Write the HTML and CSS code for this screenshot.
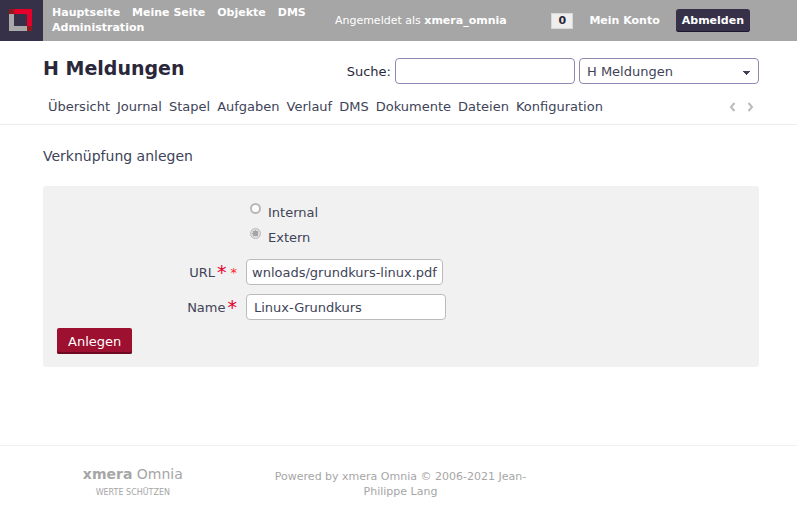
FILE: index.html
```html
<!DOCTYPE html>
<html lang="de">
<head>
<meta charset="utf-8">
<meta name="viewport" content="width=device-width, initial-scale=1">
<title>Verknüpfung anlegen - H Meldungen</title>
<link rel="stylesheet" href="styles.css">
</head>
<body>
<div class="topbar">
  <a class="logo" href="#" aria-label="xmera Omnia">
    <svg width="23" height="22" viewBox="0 0 23 22" aria-hidden="true">
      <path fill="#a9a9a9" d="M0 5h5v12h13v5H0z"/>
      <path fill="#e4002b" d="M5 0h18v17h-5V5H5z"/>
      <path fill="#8f1a1c" d="M0 0h5v5H0zM18 17h5v5h-5z"/>
    </svg>
  </a>
  <nav class="topmenu">
    <a href="#">Hauptseite</a>
    <a href="#">Meine Seite</a>
    <a href="#">Objekte</a>
    <a href="#">DMS</a>
    <a href="#">Administration</a>
  </nav>
  <div class="loggedas">Angemeldet als <a href="#">xmera_omnia</a></div>
  <div class="account">
    <a class="count" href="#">0</a>
    <a class="my-account" href="#">Mein Konto</a>
    <button class="logout" type="button">Abmelden</button>
  </div>
</div>
<header class="header">
  <div class="header-row">
    <h1>H Meldungen</h1>
    <form class="search">
      <label for="q">Suche:</label>
      <input class="field" id="q" type="text">
      <select class="field" aria-label="Projekt">
        <option>H Meldungen</option>
      </select>
    </form>
  </div>
  <div class="tabs-row">
    <nav class="tabs">
      <a href="#">Übersicht</a>
      <a href="#">Journal</a>
      <a href="#">Stapel</a>
      <a href="#">Aufgaben</a>
      <a href="#">Verlauf</a>
      <a href="#">DMS</a>
      <a href="#">Dokumente</a>
      <a href="#">Dateien</a>
      <a href="#">Konfiguration</a>
    </nav>
    <div class="scroll">
      <button type="button" aria-label="Zurück"><svg width="7" height="10" viewBox="0 0 7 10"><path d="M5.5 1L2 5l3.500 4"/></svg></button>
      <button type="button" aria-label="Weiter"><svg width="7" height="10" viewBox="0 0 7 10"><path d="M1.500 1L5 5l-3.500 4"/></svg></button>
    </div>
  </div>
</header>
<main>
  <h2>Verknüpfung anlegen</h2>
  <form class="box">
    <div class="choice"><input type="radio" name="kind" id="internal"><label for="internal">Internal</label></div>
    <div class="choice"><input type="radio" name="kind" id="extern" checked><label for="extern">Extern</label></div>
    <div class="row">
      <label for="url">URL<span class="required">*</span><span class="required small">*</span></label>
      <input class="field url" id="url" type="text" value="wnloads/grundkurs-linux.pdf">
    </div>
    <div class="row">
      <label for="name">Name<span class="required">*</span></label>
      <input class="field name" id="name" type="text" value="Linux-Grundkurs">
    </div>
    <button class="submit" type="submit">Anlegen</button>
  </form>
</main>
<footer>
  <div class="brand">
    <div class="brand-name"><b>xmera</b> Omnia</div>
    <div class="claim">WERTE SCHÜTZEN</div>
  </div>
  <div class="powered">Powered by xmera Omnia © 2006-2021 Jean-Philippe Lang</div>
</footer>
</body>
</html>
```
FILE: styles.css
```css
* {
  box-sizing: border-box;
}

body {
  display: flex;
  flex-direction: column;
  min-height: 100vh;
  margin: 0;
  background: #fff;
  color: #404358;
  font: 13px/15px "DejaVu Sans", Verdana, sans-serif;
}

a {
  color: inherit;
  text-decoration: none;
}

button,
input,
select {
  margin: 0;
  color: inherit;
  font: inherit;
}

h1,
h2 {
  margin: 0;
}

/* Top bar */
.topbar {
  display: flex;
  align-items: stretch;
  background: #a6a6a6;
  color: #fff;
  font-size: 11px;
}

.logo {
  display: flex;
  align-items: flex-start;
  width: 43px;
  height: 41px;
  padding: 9px;
  background: #363149;
}

.topmenu {
  display: flex;
  flex-wrap: wrap;
  align-content: flex-start;
  column-gap: 12px;
  width: 36%;
  padding: 5px 0 0 9px;
  font-weight: bold;
}

.loggedas {
  align-self: center;
  padding-left: 5px;
}

.loggedas a {
  font-weight: bold;
}

.account {
  display: flex;
  align-items: center;
  gap: 16px;
  margin-left: auto;
  padding-right: 47px;
  font-weight: bold;
}

.count {
  width: 22px;
  height: 16px;
  border: 1px solid #d8d8d8;
  background: #eee;
  color: #2b273b;
  line-height: 13px;
  text-align: center;
}

.logout {
  height: 23px;
  padding: 0 6px;
  border: 0;
  border-radius: 3px;
  background: #363149;
  box-shadow: inset 0 -1px #1c1830;
}

/* Project header */
.header {
  padding: 16px 38px 9px 43px;
  border-bottom: 1px solid #ededed;
}

.header-row,
.tabs-row {
  display: flex;
  align-items: center;
  justify-content: space-between;
}

h1 {
  margin-bottom: 6px;
  color: #2b273b;
  font-size: 19px;
  line-height: 22px;
}

.search {
  display: flex;
  align-items: center;
  gap: 4px;
  color: #2b273b;
}

.field {
  height: 26px;
  padding: 0 7px;
  border: 1px solid #bbb;
  border-radius: 4px;
  background: #fff;
  color: #404358;
}

.search .field {
  width: 180px;
  border-color: #9388b2;
}

.search select.field {
  appearance: none;
  background: linear-gradient(to bottom right, #404358 50%, transparent 50%) right 7px top 12px / 4px 4px no-repeat,
    linear-gradient(to bottom left, #404358 50%, transparent 50%) right 11px top 12px / 4px 4px no-repeat, #fff;
}

.tabs-row {
  padding: 13px 5px 0;
}

.tabs {
  display: flex;
  gap: 7px;
}

.tabs a {
  line-height: 17px;
}

.scroll {
  display: flex;
  gap: 11px;
}

.scroll button {
  display: flex;
  padding: 0;
  border: 0;
  background: none;
}

.scroll path {
  fill: none;
  stroke: #bbb;
  stroke-width: 2;
}

/* Content */
main {
  flex: 1;
  padding: 23px 38px 24px 43px;
}

h2 {
  font-size: 14px;
  font-weight: normal;
  line-height: 17px;
}

.box {
  margin-top: 21px;
  padding: 14px 14px 13px;
  border-radius: 3px;
  background: #f1f1f1;
}

.choice {
  display: flex;
  height: 25px;
  padding-left: 193px;
  line-height: 25px;
}

.choice input {
  appearance: none;
  width: 11px;
  height: 11px;
  margin: 3px 7px 0 0;
  border: 2px solid #b8b8b8;
  border-radius: 50%;
  background: #fff;
}

.choice input:checked {
  border: 1px solid #b8b8b8;
  background: radial-gradient(circle, #a5a5a5 3px, #ddd 3px);
}

.row {
  display: flex;
  align-items: center;
  gap: 9px;
  margin-top: 9px;
}

.row label {
  display: flex;
  align-items: center;
  justify-content: flex-end;
  width: 180px;
}

.required {
  margin-left: 2px;
  color: #e4002b;
  font-size: 19px;
}

.required.small {
  margin-left: 4px;
  color: #f22;
  font-size: 13px;
}

.url {
  width: 197px;
  padding: 0 2px;
  text-align: center;
}

.name {
  width: 200px;
}

.submit {
  height: 26px;
  margin-top: 8px;
  padding: 0 11px;
  border: 0;
  border-radius: 2px;
  background: #9d1030;
  box-shadow: inset 0 -2px #6d0a20;
  color: #fff;
}

/* Footer */
footer {
  display: grid;
  grid-template-columns: 1fr 1fr 1fr;
  padding: 19px 0 13px;
  border-top: 1px solid #f0f0f0;
  color: #a6a6a6;
  font-size: 11px;
  text-align: center;
}

.brand-name {
  font-size: 14px;
  line-height: 18px;
}

.claim {
  margin-top: 2px;
  margin-bottom: 1px;
  font-size: 8px;
}

.powered {
  padding: 4px 2px 0 6px;
}
```
